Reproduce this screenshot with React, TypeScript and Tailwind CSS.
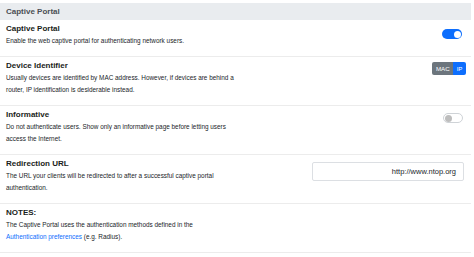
import React from 'react';

const Toggle: React.FC<{ on: boolean }> = ({ on }) =>
  on ? (
    <span className="flex h-[10px] w-[20px] items-center justify-end rounded-full bg-[#0d6efd] pr-[1.5px]">
      <span className="h-[7px] w-[7px] rounded-full bg-white" />
    </span>
  ) : (
    <span className="flex h-[10px] w-[20px] items-center rounded-full border border-[#cfd3d7] bg-white pl-[1px]">
      <span className="h-[7px] w-[7px] rounded-full bg-[#bdbdbd]" />
    </span>
  );

interface RowProps {
  title: string;
  children: React.ReactNode;
  control?: React.ReactNode;
  controlClass?: string;
}

const Row: React.FC<RowProps> = ({ title, children, control, controlClass }) => (
  <div className="flex justify-between border-b border-[#ececec] pl-[6px] pt-[3px] pb-[9px]">
    <div>
      <div className="text-[8px] font-bold leading-[12px] text-[#1a1d20]">{title}</div>
      <div className="text-[6.4px] leading-[12px] text-[#212529]">{children}</div>
    </div>
    {control && <div className={controlClass}>{control}</div>}
  </div>
);

export default function App() {
  return (
    <div className="w-[471px] bg-white pt-[3px]" style={{ fontFamily: '"Liberation Sans", Arial, sans-serif' }}>
      <div className="flex h-[17px] items-center bg-[#e9ecef] pl-[6px] text-[8px] font-bold text-[#4a4f54]">
        Captive Portal
      </div>

      <Row title="Captive Portal" control={<Toggle on />} controlClass="pt-[6px] pr-[9px]">
        Enable the web captive portal for authenticating network users.
      </Row>

      <Row
        title="Device Identifier"
        controlClass="pt-[2px] pr-[5px]"
        control={
          <div className="flex h-[13px] overflow-hidden rounded-[2px] text-[6.2px] leading-[13px] text-white">
            <span className="bg-[#6c757d] px-[3.5px]">MAC</span>
            <span className="bg-[#0d6efd] px-[3.5px]">IP</span>
          </div>
        }
      >
        Usually devices are identified by MAC address. However, if devices are behind a
        <br />
        router, IP identification is desiderable instead.
      </Row>

      <Row title="Informative" control={<Toggle on={false} />} controlClass="pt-[4px] pr-[8px]">
        Do not authenticate users. Show only an informative page before letting users
        <br />
        access the Internet.
      </Row>

      <Row
        title="Redirection URL"
        controlClass="pt-[4px] pr-[7px]"
        control={
          <div className="flex h-[19px] w-[152px] items-center justify-end rounded-[2px] border border-[#dcdfe3] pr-[7px] text-[7.5px] text-[#212529]">
            http://www.ntop.org
          </div>
        }
      >
        The URL your clients will be redirected to after a successful captive portal
        <br />
        authentication.
      </Row>

      <Row title="NOTES:">
        The Captive Portal uses the authentication methods defined in the
        <br />
        <span className="text-[#0d6efd]">Authentication preferences</span> (e.g. Radius).
      </Row>
    </div>
  );
}
